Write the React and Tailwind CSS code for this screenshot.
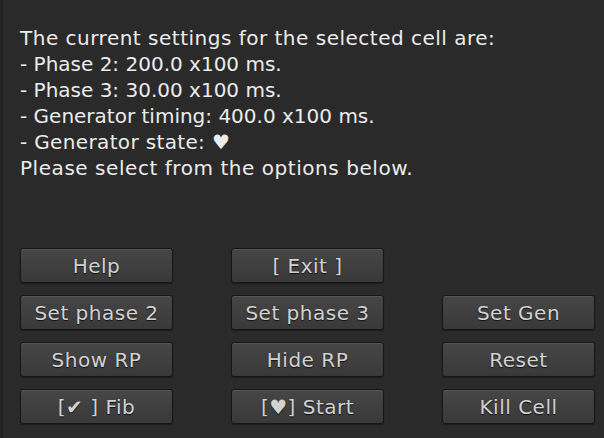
const lines = [
  { text: 'The current settings for the selected cell are:', cls: 'tracking-[0.5px]' },
  { text: '- Phase 2: 200.0 x100 ms.', cls: '' },
  { text: '- Phase 3: 30.00 x100 ms.', cls: '' },
  { text: '- Generator timing: 400.0 x100 ms.', cls: '' },
  { text: '- Generator state: ♥', cls: 'tracking-[0.35px]' },
  { text: 'Please select from the options below.', cls: 'tracking-[0.55px]' },
];

const buttons = [
  'Help', '[ Exit ]', null,
  'Set phase 2', 'Set phase 3', 'Set Gen',
  'Show RP', 'Hide RP', 'Reset',
  '[✔ ] Fib', '[♥] Start', 'Kill Cell',
];

const Button = ({ label }) => (
  <div className="h-[35px] rounded-[3px] border border-[#161616] bg-gradient-to-b from-[#464646] to-[#393939] shadow-[inset_0_1px_0_#555,0_1px_1px_#1c1c1c] flex items-center justify-center text-[20px] tracking-[0.5px] text-[#d2d2d2] [text-shadow:0_1px_1px_#111]">
    {label}
  </div>
);

export default function App() {
  return (
    <div className="w-[604px] h-[438px] bg-[#2a2a2a] flex overflow-hidden font-['DejaVu_Sans',sans-serif]">
      <div className="w-[3px] bg-[#232323] border-r border-[#1c1c1c]" />
      <div className="flex-1 pl-[17px] pt-[25px]">
        <div className="text-[20px] leading-[26px] text-[#ececec]">
          {lines.map((l) => (
            <div key={l.text} className={l.cls}>{l.text}</div>
          ))}
        </div>
        <div className="mt-[67px] grid grid-cols-[153px_153px_153px] gap-x-[58px] gap-y-[12px]">
          {buttons.map((b, i) => (b ? <Button key={i} label={b} /> : <div key={i} />))}
        </div>
      </div>
    </div>
  );
}
